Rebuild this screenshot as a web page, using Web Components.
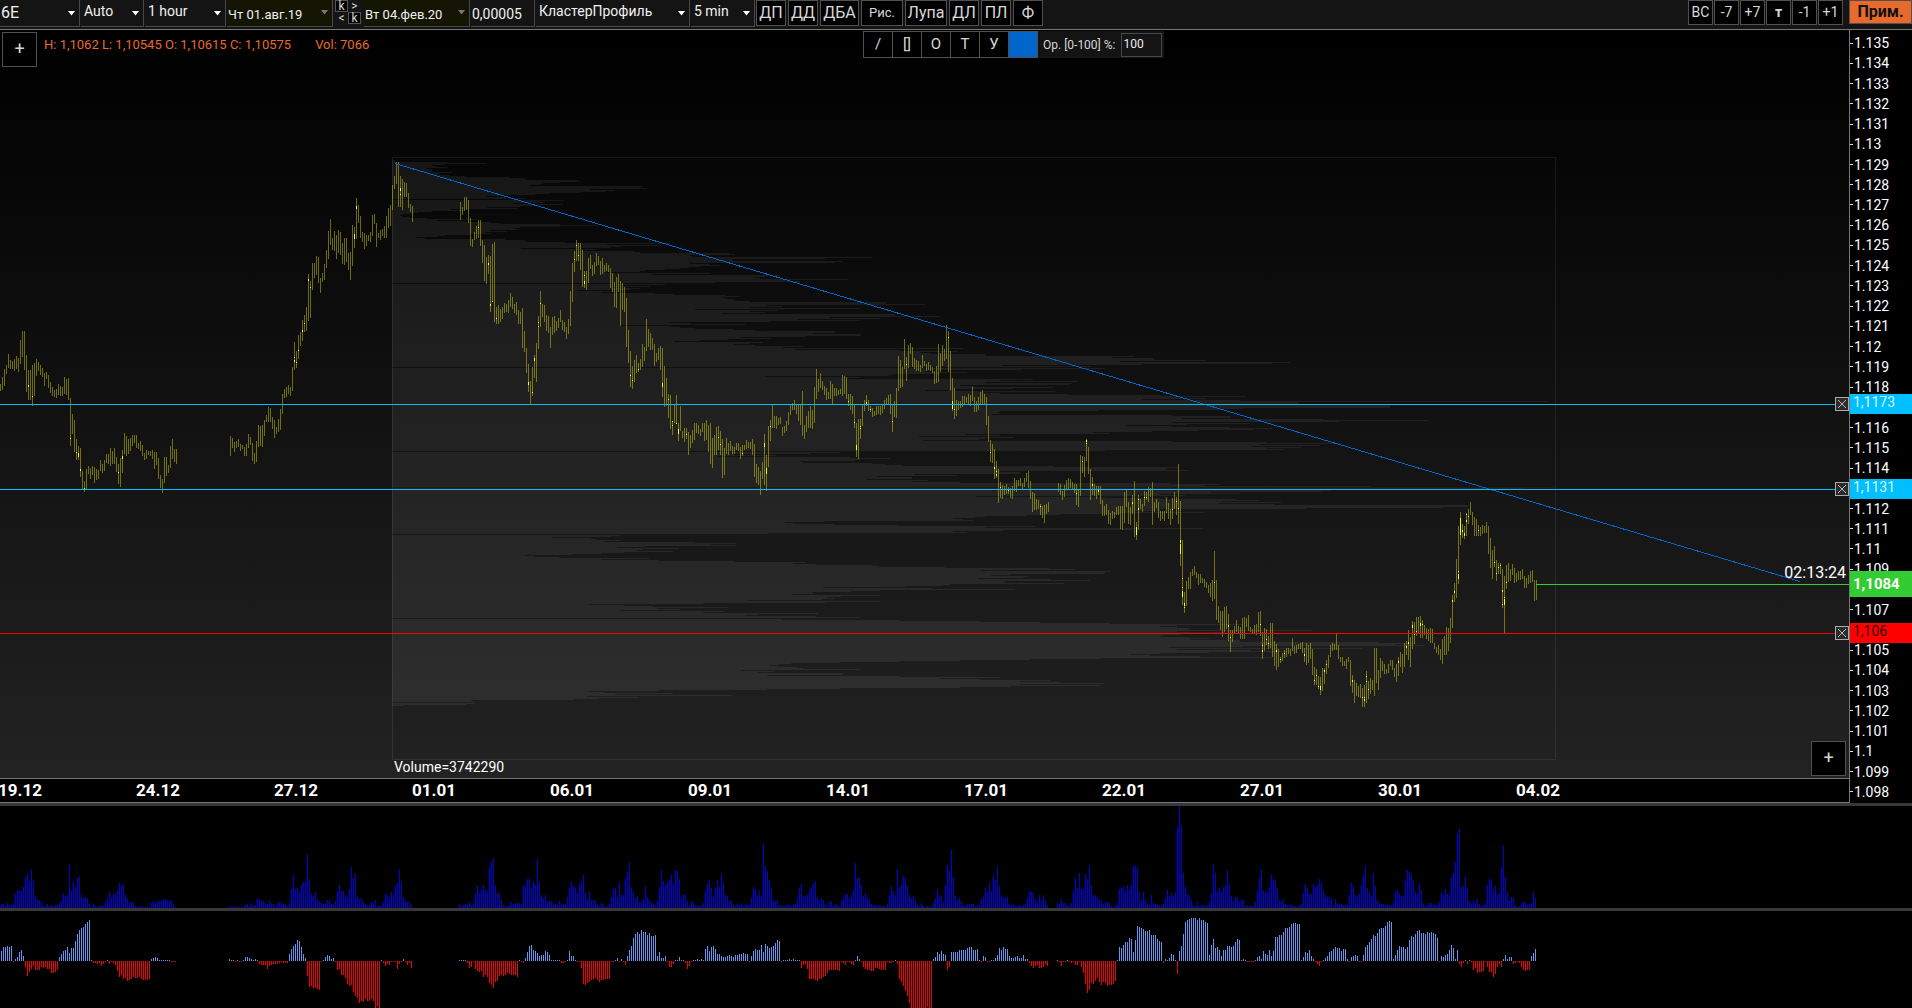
<!DOCTYPE html>
<html lang="ru">
<head>
<meta charset="utf-8">
<title>6E, 1 hour</title>
<style>
html,body{margin:0;height:100%;background:#000}
body{font-family:Roboto,"Liberation Sans",sans-serif;font-size:14px;color:#eee}
</style>
</head>
<body>
<trade-app></trade-app>
<script>
const define=(name,css,html,setup)=>customElements.define(name,class extends HTMLElement{
  connectedCallback(){
    if(this.shadowRoot)return;
    const root=this.attachShadow({mode:'open'});
    root.innerHTML=`<style>:host,*{box-sizing:border-box}${css}</style>${typeof html==='function'?html(this):html}`;
    if(setup)setup(root,this);
  }
});

/* ---------- market data: bars are 2px apart, a run starts at x ---------- */
const CANDLES={
0:`384 391 377 390 369 386 365 374 354 368 360 369 361 369 359 371 356 369 358 372 340 364 331 357 331 370 355 392 370 400 370 400 365 406 363 396 359 376 362 371 365 375 368 377 373 386 372 379 375 388 382 393 387 396 390 397 389 398 384 395 386 396 387 396 377 394 379 395 378 400 398 446 414 434 420 452 439 460 446 460 448 477 471 489 481 492 469 489 466 474 468 479 466 475 467 483 469 480 470 479 460 471 464 473 460 471 454 463 454 464 448 466 451 464 448 464 457 472 464 484 458 487 450 473 433 454 436 456 439 454 438 451 435 446 435 443 435 448 443 449 441 451 445 456 453 460 450 459 451 455 451 456 450 459 452 469 452 465 458 479 475 488 479 493 457 483 457 476 465 473 446 468 439 459 449 462 449 464`,
230:`436 456 438 448 442 452 441 448 439 447 444 451 445 449 447 456 444 456 434 448 437 445 443 461 453 464 441 462 425 447 426 446 425 447 420 436 415 422 407 422 408 422 417 429 420 438 427 434 419 432 409 430 394 414 389 398 387 397 385 394 387 396 367 391 342 370 351 368 335 359 332 346 320 341 315 332 307 331 274 321 281 318 263 290 263 278 256 275 257 283 278 293 273 282 264 280 250 268 231 259 219 245 238 250 231 251 235 259 230 253 232 255 243 264 238 265 238 262 253 270 252 280 225 266 227 248 198 239 205 223 216 238 232 242 233 249 235 246 235 241 232 242 215 236 214 224 223 247 233 238 230 240 229 236 226 238 216 238 208 228 205 226 185 210 176 189 162 184 162 207 176 207 179 210 182 197 183 197 193 208 204 212 206 222`,
460:`202 220 207 215 197 211 197 210 200 223 218 246 239 247 232 240 226 239 220 238 220 246 240 263 245 281 257 284 255 274 256 312 244 302 242 322 307 324 305 324 309 322 307 319 303 313 304 312 300 313 293 307 297 309 304 313 302 315 310 324 312 324 308 348 331 352 348 373 364 392 381 405 367 396 355 378 343 382 316 349 291 327 304 317 305 322 315 331 316 333 327 348 317 335 316 333 321 331 318 328 310 322 320 330 322 332 327 339 319 334 291 326 263 302 251 272 240 261 243 261 243 270 250 287 271 288 271 290 258 283 255 269 265 276 262 274 253 266 256 265 261 275 258 274 265 272 263 271 265 272 268 288 273 292 282 307 277 308 274 292 281 326 283 310 287 312 298 347 330 363 351 387 366 389 360 382 355 373 363 372 359 370 344 367 347 361 319 351 329 347 333 350 338 350 344 366 353 362 348 360 346 370 348 397 366 407 378 406 394 418 395 429 421 435 404 423 395 424 423 441 406 431 431 438 428 442 428 439 432 455 435 448 430 443 423 440 423 433 425 434 429 436 423 432 423 441 420 440 425 452 423 464 438 468 435 455 427 455 426 450 431 455 439 478 448 475 438 454 443 455 441 451 446 454 447 454 443 450 443 451 447 459 445 456 445 450 440 449 442 448 442 449 439 455 444 477 464 483 467 485 471 495 462 479 434 485 455 491 426 467 420 441 404 428 416 428 416 429 418 425 417 424 427 436 426 433 421 431 412 425 404 415 403 410 400 410 404 414 404 421 404 425 391 436 425 439 416 432 411 428 406 428 410 429 387 423 369 399 379 392 373 388 381 390 386 395 388 400 392 399 381 399 384 405 388 396 388 396 390 395 389 394 375 396 376 394 377 399 394 406 394 410 396 414 405 428 423 457 419 459`,
860:`419 439 405 426 400 411 395 406 400 411 406 412 408 417 411 416 406 415 406 414 406 415 405 413 400 409 398 405 395 405 394 414 405 432 401 417 388 418 356 391 360 388 367 387 339 369 357 381 345 368 343 354 347 367 358 369 360 371 361 371 365 372 355 368 361 366 364 371 362 370 365 371 367 373 371 384 366 383 344 382 353 372 345 366 349 361 325 359 331 372 351 391 378 411 388 419 400 416 401 410 401 408 396 407 396 405 397 403 394 405 395 406 387 401 397 412 401 412 397 410 392 405 390 404 394 404 397 425 416 442 440 462 444 463 449 479 461 478 469 503 482 498 485 499 486 495 484 494 487 494 488 498 486 499 478 491 480 492 480 486 478 486 483 489 478 487 473 482 471 488 481 499 492 512 493 510 499 510 500 509 504 515 506 518 505 523 504 514 502 512`,
1058:`483 492 484 495 491 500 485 497 480 490 478 489 479 488 482 490 484 493 484 505 489 507 455 496 456 473 457 477 439 461 447 474 469 500 477 495 484 496 486 499 486 495 486 504 500 516 506 516 504 515 510 524 513 525 511 519 512 518 507 515 506 515 506 529 506 530 492 523 489 507 502 524 507 525 495 514 481 537 522 540 495 530 499 509 504 512 491 506 492 500 487 502 488 497 482 525 502 512 499 508 502 518 511 521 511 519 511 521 497 513 503 519 509 525 498 519 492 509 497 515 464 524 501 566 540 605 592 613 581 606 577 589 572 589 569 576 566 575 572 578 574 585 574 583 578 583 579 587 582 588 585 593 583 597 580 601 551 599 580 620 606 623 611 630 611 637 607 632 606 629 614 641 630 652 630 642 626 634 620 632 626 633 627 639 618 639 617 639 618 627 615 631 627 632 629 634 625 634 624 635 612 632 611 636 632 659 628 651 629 645 636 649 623 648 623 657 641 666 644 670 649 667 657 663 653 661 650 658 648 657 648 654 649 656 638 651 646 654 645 653 644 649 643 649 642 653 648 662 643 665 645 663 643 659 649 675 667 685 669 685 676 689 677 695 668 691 668 684 660 674 655 668 645 657 643 651 644 650 634 650 645 659 657 662 657 666 661 666 659 669 657 662 660 686 675 693 680 703 683 696 686 697 684 698 688 707 685 707 671 703 681 699 678 694 680 690 648 696 648 683 670 690 658 678 661 671 664 674 669 674 664 673 660 666 660 670 668 677 664 682 657 676 652 667 654 673 643 667 641 655 630 660 637 667 621 649 622 644 617 636 617 633 616 638 620 638 625 635 628 639 629 641 628 643 629 643 643 649 647 653 645 655 649 660 639 664 636 655 627 655 628 651 618 643 595 628 583 602 559 598 526 584 512 545 524 538 526 539 513 536 509 524 502 515 512 525 517 536 519 536 525 536 527 536 525 534 526 533 522 533 526 554 538 568 550 579 546 567 560 581 563 574 563 574 569 608 576 633 565 589 563 582 569 581 564 575 568 583 573 582 571 580 571 580 569 579 576 588 578 588 575 584 571 583 570 582 580 601 580 600`};
/* x, y, length of the high-volume clusters */
const CLUSTERS=`28 385 2 32 396 1 70 438 1 76 452 1 78 453 4 80 469 2 84 488 1 118 472 1 122 456 3 294 357 1 294 360 2 296 362 1 298 350 1 302 330 2 304 323 1 308 279 2 310 287 1 354 234 5 356 206 3 400 188 3 400 194 1 478 227 1 488 263 2 490 304 2 492 301 1 496 318 1 528 382 3 532 392 1 534 358 3 538 322 1 538 326 1 540 303 1 574 259 1 576 245 1 578 255 1 584 275 1 584 281 3 630 375 1 632 380 1 638 369 1 662 383 4 668 399 1 672 421 1 672 425 1 676 423 1 678 429 5 686 434 1 718 437 1 720 444 1 742 453 1 764 443 4 766 468 6 770 426 1 848 401 1 854 422 1 856 445 5 860 426 1 860 428 1 866 402 2 870 409 1 892 421 1 906 364 1 948 337 1 952 401 8 954 409 1 990 452 1 994 467 2 996 471 1 996 474 2 1000 487 1 1008 489 2 1040 506 1 1076 493 1 1082 461 1 1086 440 2 1086 443 1 1092 484 2 1098 490 2 1132 502 2 1138 499 1 1138 508 2 1136 527 8 1144 497 1 1146 497 1 1172 509 1 1176 501 1 1178 508 1 1180 540 3 1180 544 10 1182 578 1 1182 587 1 1182 591 6 1184 603 3 1184 607 1 1214 582 1 1228 625 2 1230 637 1 1260 624 1 1262 645 1 1262 650 2 1266 639 1 1268 643 1 1276 650 2 1280 659 1 1284 653 1 1304 654 2 1314 680 1 1316 675 1 1318 686 1 1320 686 4 1324 670 2 1326 664 1 1352 680 2 1362 697 1 1364 697 1 1364 699 2 1366 676 1 1366 681 1 1368 689 1 1398 661 2 1406 646 2 1408 642 2 1412 625 3 1414 634 1 1416 631 1 1420 623 3 1422 624 1 1452 600 2 1454 591 2 1458 571 1 1458 574 5 1460 518 17 1462 530 2 1464 533 3 1466 514 1 1466 520 2 1468 516 1 1478 530 1 1494 562 1 1496 573 1 1498 567 1 1500 565 1 1502 590 2 1502 604 1 1504 597 1 1504 599 6 1506 582 1`;
/* right edge of the volume profile, one price step per row, from y=160 down */
const PROFILE=`395 395 447 486 444 432 436 448 426 432 432 432 452 440 438 450 465 509 524 526 578 580 560 543 540 530 643 640 646 590 615 605 580 550 535 502 486 505 525 392
564 540 545 513 563 538 520 487 518 451 465 432 418 414 402 400 402 410 427 477 437 465 490 500 560 598 560 520 515 518 490 507 485 492 470 445 438 416 425 505 524 526 565 670 607 661 620 610 521 595 575 634 640 730 735 690 692 872 825 733 733 842 835 690 710 720 700 689 680 665 645 640 607 710 652 780 765 755 760 848 790 800 715 392
665 612 650 612 640 630 577 620 601 655 674 725 740 722 725 733 735 750 886 886 925 767 782 750 860 695 778 750 765 722 895 895 940 830 880 798 860 770 669 690 745 620 670 680 695 734 755 835 835 813 860 861 805 740 771 728 700 674 763 750 734 755 804 783 963 795
900 958 920 930 985 985 1134 1112 1154 1154 1206 1120 1290 1272 1142 1002 1091 392 1105 1022 930 925 967 940 893 889 765 860 845 1033 1000 1078 985 1072 1069 960 975 1053 1013 955 925 1056 985 1000 1068 1160 1246 1180 1206 1141
1240 1548 1299 1299 1299 1390 1390 1390 1243 1220 1098 1000 998 1000 992 1172 1231 1231 1182 1323 1428 1339 1172 1250 1187 1126 1172 1230 1272 1254 1198 1152 1093 1109 966 1000 919 1014 985 979 923 1172 1266 1341 1260 1320 1252 1301 1267 1284
1105 392 840 810 734 776 718 850 890 860 855 800 803 872 885 902 1054 1178 1166 1167 1188 1000 1020 1020 914 957 877 912 912 866 928 912 960 1170 1220 1205 1371 392 1524 1524 1331 1321 1210 1240 1160 1185 976 1105 1160 1236
1259 1222 1281 1219 1274 1468 1468 1443 1306 1160 1160 1135 1204 1120 1060 1026 985 975 953 963 973 824 785 793 834 897 1035 985 1203 1132 1003 953 967 768 392 620 611 552 591 596 620 604 695 736 711 736 644 617 679 642
637 673 624 601 572 525 534 559 649 601 659 734 806 793 816 872 879 945 1049 1075 981 1111 1106 1104 1010 991 1028 1023 978 1050 1090 1005 1004 1064 950 943 905 823 932 1015 880 851 812 813 792 880 841 827 834 822
748 880 825 703 589 624 653 728 657 680 620 724 703 818 758 745 816 860 392 782 900 980 1040 1110 1243 1177 1160 1177 1188 1189 1312 1177 1226 1180 1180 1163 1160 1188 1209 1190 1240 1240 1378 1416 1395 1424 1242 1169 1362 1177
1250 1290 1209 1160 1130 1150 1200 1272 1100 1030 960 900 840 791 779 770 778 797 803 860 741 775 758 844 842 767 900 1000 940 980 1050 1020 1060 1104 1020 1100 1010 960 840 767 659 589 604 673 615 732 587 638 599 574 471 475 392 475 466 404`;
/* keyed by bar number */
const VOLUME={
0:`4 4 2 5 3 3 5 14 18 17 17 21 30 34 27 39 27 12 9 8 6 2 2 4 2 3 2 3 3 5 8 15 12 13 43 17 26 21 30 32 14 10 11 10 5 1 4 2 1 2 3 2 6 9 16 11 14 14 17 25 22 24 14 10 6 6 6 2 1 1 2 1 1 1 1 5 7 6 6 7 7 9 9 8 7 8 4 1`,
114:`2 1 2 1 1 1 1 1 3 4 2 5 2 3 10 8 7 7 5 4 8 5 4 1 5 6 6 4 3 2 5 19 33 19 20 17 23 26 26 54 29 15 12 16 9 7 5 4 5 8 8 4 3 7 17 23 17 17 13 11 19 41 30 34 11 9 10 6 4 3 3 6 5 8 2 3 2 6 14 13 10 16 13 22 25 39 26 11 7 6 6 3`,
229:`4 2 3 4 3 6 3 5 14 23 15 19 23 18 17 41 46 50 23 15 15 8 3 2 2 3 6 4 5 5 5 4 23 23 29 30 20 26 23 49 26 13 10 13 7 7 7 5 4 3 7 5 3 4 11 20 26 22 21 15 24 26 33 15 10 17 8 8 8 3 2 5 4 1 2 4 11 19 20 11 26 13 13 30 36 46 21 16 10 12 6 6 9 22 11 9 6 5 3 7 19 38 27 23 26 28 33 25 38 37 29 11 13 14 7 2 7 5 3 3 2 3 5 17 24 28 20 11 20 28 21 34 25 14 12 7 8 3 2 4 3 5 2 4 3 3 10 21 19 13 17 12 64 42 37 28 20 8 7 8 3 3 2 3 3 4 2 3 4 10 20 24 12 11 13 18 20 24 27 11 8 10 8 4 2 6 7 2 4 3 1 8 10 14 14 10 13 17 45 30 30 23 12 15 11 9 4 3 3 2 3 2 2 1 4 12 22 17 13 39 20 23 32 30 22 14 10 12 8 3 2 5 2 1 2 2 1 5 9 19 13 12 6 23 43 37 58 31 12 8 10 7 3 2 4 4 4 4 1 3 3 9 11 20 16 25 17 32 28 42 22 13 11 10 11 5 3 4 2 2 3 2 3 4 10 17 17 15 9 6 13 8 13 8 3`,
528:`5 4 9 5 5 3 2 5 17 30 20 35 19 19 34 29 42 23 13 13 11 9 8 4 6 6 5 2 1 3 5 19 20 22 17 23 18 23 42 42 41 16 8 16 9 5 3 13 5 4 3 3 2 4 10 18 12 15 12 16 80 102 83 35 22 14 13 8 3 2 6 2 3 3 2 3 6 14 44 35 17 20 16 21 22 38 24 12 7 11 11 6 9 8 2 3 2 2 2 6 17 30 39 18 15 16 21 33 29 28 20 8 7 9 4 3 3 4 2 2 1 3 4 15 24 20 14 14 24 21 23 29 25 17 13 11 11 9 2 9 5 3 4 3 3 3 13 25 22 13 11 14 23 33 42 20 16 12 35 22 8 5 4 4 3 4 3 3 6 16 18 15 12 12 27 38 36 34 28 16 14 25 18 5 2 3 5 5 4 3 3 6 15 14 19 14 14 30 35 46 74 79 21 22 32 20 7 5 8 6 9 4 2 3 5 23 30 28 19 22 14 15 41 63 31 16 7 11 11 3 1 2 5 6 6 3 4 5 16 10`};
const DELTA={
0:`10 14 14 15 14 15 -1 2 4 9 11 5 -6 -15 -11 -8 -5 -9 -9 -9 -6 -7 -6 -8 -8 -12 -12 -11 -9 4 7 10 11 14 8 13 13 20 27 31 33 34 37 39 41 1 -2 -2 -3 -2 -5 -3 -1 1 -3 -1 -2 -4 -10 -16 -14 -18 -17 -20 -19 -18 -16 -17 -17 -16 -18 -19 -19 -19 -18 2 3 4 3 1 1 1 1 1 1 -1 -1 -1`,
114:`2 1 1 -1 1 -1 -1 1 4 4 3 2 1 2 1 -3 -4 -4 -4 -8 -5 -4 -3 -3 -3 -2 -1 -2 -2 -2 7 12 15 17 21 20 14 7 3 -15 -26 -25 -27 -27 -28 -29 -1 1 4 6 5 2 3 -1 -9 -8 -14 -14 -17 -23 -25 -24 -31 -35 -37 -42 -40 -41 -38 -40 -40 -38 -40 -47 -46 -47 1 -2 -5 -3 -4 -1 -1 -1 -8 -3 -1 2 -1 -4 -2 -7`,
229:`1 1 1 1 -2 -7 -6 -1 -8 -10 -11 -10 -16 -14 -16 -22 -24 -27 -21 -20 -15 -14 -15 -14 -12 -13 -14 -14 -14 -16 1 -1 -2 3 9 15 16 11 10 8 5 6 6 10 9 6 1 1 1 1 1 -2 -2 -1 1 10 5 5 1 -1 -1 -7 -23 -24 -22 -21 -19 -18 -17 -19 -21 -19 -19 -18 -18 -18 -1 -1 1 3 -1 2 -1 -4 5 11 15 23 27 29 27`,
320:`31 29 29 26 28 25 25 26 5 9 3 3 5 -1 -6 -6 -3 1 1 4 1 1 -2 -8 -5 -1 1 1 2 1 2 1 12 15 10 14 15 12 7 7 5 4 4 5 6 5 4 6 6 7 7 8 7 7 -1 5 10 12 11 11 16 9 17 15 13 14 15 18 21 20 -1 1 1 1 2 1 2 1 1 1 -7 -4 -3 -8 -18 -18 -18 -19 -20 -18 -18 -16 -15 -12 -9 -9 -9 -9 -9 -10 -1 -2 -4 -1 -1 -3 -4 1 5 2 -1 -6 -8 -9 -9 -10 -10 -7 -7 -8 -9 -9 -9 -1 -2 -2 -1 1 -3 -18 -21 -25 -30 -35 -42 -47 -47 -47 -47 -47 -47 -47 -47 -46 -47 -47`,
466:`2 4 9 7 10 7 6 -9 -6 9 9 9 9 11 11 11 11 13 14 14 11 11 12 1 -1 5 4 -1 -1 1 1 3 6 13 11 14 12 12 5 3 3 4 5 3 3 6 2 2 -2 -5 -7 -5 -4 -7 -7 -6 -3 -5`,
528:`1 -1 -5 -1 -1 1 -1 -2 -1 -4 -4 -1 -6 -12 -23 -32 -29 -22 -23 -20 -17 -21 -24 -21 -22 -25 -24 -24 -23 -20 1 14 13 16 19 19 23 22 9 21 35 34 33 32 30 30 31 26 26 26 22 20 19 -2 2 1 3 7 6 1 -13 10 15 27 39 41 42 43 43 43 41 43 41 41 39 38 6 16 22 13 14 11 5 11 11 15 15 14 15 19 22 21 1 2 1 -1 -1 -1 -1 1 4 5 2 10 7 6 11 5 10 24 24 26 26 29 33 33 34 37 38 38 37 37 1 4 9 8 11 5 2 -1 -3 -5 -1 1 3 5 9 10 12 14 13 13 10 12 12 2 -1 4 5 6 5 -1 -1 6 14 16 19 22 26 25 28 32 33 33 35 39 40 39 2 6 11 15 14 14 12 14 21 25 24 27 30 31 28 28 27 29 28 29 28 27 23 -1 5 4 6 7 11 16 13 2 11 -3 -6 -2 1 -3 1 -1 -9 -7 -12 -11 -11 -10 -1 -6 -11 -11 -16 -13 -6 -3 -6 2 6 2 4 4 -3 -2 -1 -2 -6 -9 -10 -9 -9 5 8 12`};
const nums=s=>s.trim().split(/\s+/).map(Number);
const TOP=30;

/* ---------- controls ---------- */
define('pick-list',`
:host{display:block;position:relative;height:27px;flex:none;width:var(--w)}
select{appearance:none;width:100%;height:100%;margin:0;padding:0 16px 5px 3px;border:solid #484848;border-width:0 1px 1px 0;border-radius:0;background:#141414;color:#f0f0f0;font:inherit}
:host([big]) select{font-size:16px;padding:0 16px 2px 1px}
:host([date]) select{background:#151504;padding:3px 16px 0 1px;font-size:13px}
svg{position:absolute;right:5px;top:11px;width:7px;height:5px;fill:#fff;pointer-events:none}
:host([date]) svg{fill:#77777a;top:10px}`,
h=>`<select aria-label="${h.getAttribute('name')}"><option>${h.getAttribute('value')}</option></select><svg viewBox="0 0 7 5"><path d="M0 0h7L3.5 4.5z"/></svg>`);

define('tool-button',`
:host{display:block;flex:none;width:var(--w,30px);height:var(--h,26px)}
button{width:100%;height:100%;margin:0;padding:0 0 2px;display:grid;place-items:center;border:1px solid #505050;border-radius:0;background:var(--bg,#000);color:var(--ink,#d8d8d8);font:inherit}`,
h=>`<button${h.title?` aria-label="${h.title}"`:''}><slot></slot></button>`);

define('top-bar',`
:host{display:flex;height:29px;background:#141414;align-items:flex-start;gap:1px;overflow:hidden}
.step{display:grid;grid-template-columns:13px 13px;grid-auto-rows:12px;margin:0 2px 0 1px;width:26px}
.step button{margin:0;padding:0;border:0;background:none;color:#d8d8d8;font:inherit;font-size:12px;line-height:10px}
.step .k{border:1px solid #555;background:#000}
input{width:64px;height:27px;margin:0;padding:2px 0 0 1px;border:solid #484848;border-width:0 1px 1px 0;background:#141414;color:#f0f0f0;font:inherit}
.tools{display:flex;gap:2px;font-size:16px}
.days{display:flex;gap:1px;margin-left:auto;margin-right:5px;font-size:14px;--w:25px;--h:25px}
.small{font-size:13px}
.apply{--w:63px;--h:24px;--bg:#e8692c;--ink:#111;font-weight:700;font-size:16px}`,`
<pick-list big name="Инструмент" value="6E" style="--w:80px"></pick-list>
<pick-list name="Масштаб" value="Auto" style="--w:63px"></pick-list>
<pick-list name="Период" value="1 hour" style="--w:81px"></pick-list>
<pick-list date name="Дата начала" value="Чт 01.авг.19" style="--w:106px"></pick-list>
<div class="step"><button class="k">k</button><button>&gt;</button><button>&lt;</button><button class="k">k</button></div>
<pick-list date name="Дата конца" value="Вт 04.фев.20" style="--w:106px"></pick-list>
<input aria-label="Шаг цены" value="0,00005">
<pick-list name="Тип графика" value="КластерПрофиль" style="--w:154px"></pick-list>
<pick-list name="Кластер" value="5 min" style="--w:64px"></pick-list>
<div class="tools"><tool-button>ДП</tool-button><tool-button>ДД</tool-button><tool-button style="--w:39px">ДБА</tool-button><tool-button class="small" style="--w:42px">Рис.</tool-button><tool-button style="--w:42px">Лупа</tool-button><tool-button>ДЛ</tool-button><tool-button>ПЛ</tool-button><tool-button>Ф</tool-button></div>
<div class="days"><tool-button>ВС</tool-button><tool-button>-7</tool-button><tool-button>+7</tool-button><tool-button><b>т</b></tool-button><tool-button>-1</tool-button><tool-button>+1</tool-button></div>
<tool-button class="apply">Прим.</tool-button>`);

define('draw-bar',`
:host{display:flex;height:27px;background:#141414;align-items:center;--w:30px;--h:27px;font-size:15px}
tool-button + tool-button{margin-left:-1px}
label{font-size:12px;color:#d8d8d8;margin:0 6px 0 5px}
input{width:41px;height:24px;margin:0 2px 0 0;padding:0 0 2px 1px;border:1px solid #484848;background:#141414;color:#eee;font:inherit;font-size:12px}`,`
<tool-button>/</tool-button><tool-button>[]</tool-button><tool-button>О</tool-button><tool-button>Т</tool-button><tool-button>У</tool-button><tool-button title="Цвет" style="--bg:#0066cc"></tool-button>
<label for="op">Ор. [0-100] %:</label><input id="op" value="100">`);

/* ---------- chart ---------- */
define('price-plot',`
:host{display:block;height:748px;background:linear-gradient(#000,#222)}
svg{display:block;width:100%;height:100%;shape-rendering:crispEdges;fill:none;overflow:hidden}`,()=>{
  let bars='',marks='',rows='';
  for(const[start,list]of Object.entries(CANDLES)){
    const v=nums(list);
    for(let i=0;i<v.length;i+=2)bars+=`M${+start+i+.5} ${v[i]-TOP}V${v[i+1]-TOP}`;
  }
  const c=nums(CLUSTERS);
  for(let i=0;i<c.length;i+=3)marks+=`M${c[i]+.5} ${c[i+1]-TOP}v${c[i+2]}`;
  nums(PROFILE).forEach((x,i)=>{if(x>392)rows+=`M392 ${160+i-TOP}H${x}v1H392z`});
  return `<svg role="img" aria-label="6E">
<rect x="392.5" y="127.5" width="1163" height="602" stroke="#fff" stroke-opacity=".08"/>
<path d="${rows}" fill="#fff" fill-opacity=".068"/>
<path d="M392 457.5H1555" stroke="#f00" stroke-opacity=".12"/>
<path d="${bars}" stroke="#ff0" stroke-opacity=".4"/>
<path d="${marks}" stroke="#ff0"/>
<path d="M395 133.5L1800 551.5" stroke="#0066cc"/></svg>`;
});

define('price-axis',`
:host{display:flex;flex-direction:column;border-left:1px solid #777;background:#000;padding:3px 0 1px;color:#fff;font-size:14px}
div{flex:1;display:flex;align-items:center;gap:1px;line-height:16px}
div::before{content:"";width:3px;height:1px;background:#ddd}
.off{visibility:hidden}`,()=>{
  const hidden=[1117,1113,1108,1106];let out='';
  for(let p=1135;p>=1098;p--)out+=hidden.includes(p)?'<div class="off"></div>':`<div>${p/1000}</div>`;
  return out;
});

define('time-axis',`
:host{display:flex;height:25px;overflow:hidden;border:solid #777;border-width:1px 0;background:#000;color:#fff;font-weight:700;font-size:17px}
span{flex:0 0 138px;text-align:center;line-height:22px}
span:first-of-type{margin-left:-49px}`,
'19.12 24.12 27.12 01.01 06.01 09.01 14.01 17.01 22.01 27.01 30.01 04.02'.split(' ').map(d=>`<span>${d}</span>`).join(''));

define('price-level',`
:host{position:absolute;left:var(--from,0px);right:0;top:var(--y);height:var(--size,20px);display:flex;align-items:center;color:var(--ink)}
i{flex:1;height:1px;background:var(--tone)}
button{width:14px;height:14px;margin:0;padding:1px;border:1px solid #aaa;background:#2b2b2b;display:block}
button svg{display:block;width:10px;height:10px;stroke:#bbb}
output{width:62px;height:100%;margin-left:1px;background:var(--tone);padding-left:3px;line-height:calc(var(--size,20px) - 4px)}
:host([live]) output{font-weight:700;font-size:15px;line-height:26px}`,
h=>`<i></i>${h.hasAttribute('live')?'':'<button aria-label="Удалить уровень"><svg viewBox="0 0 10 10"><path d="M1 1L9 9M9 1L1 9"/></svg></button>'}<output><slot></slot></output>`);

define('main-chart',`
:host{display:grid;grid-template-columns:minmax(0,1fr) 63px;position:relative;border-top:1px solid #777}
price-axis{grid-row:1/3;grid-column:2}
.over{position:absolute}
.quote{left:44px;top:7px;display:flex;gap:24px;color:#e8692c;font-size:13px;line-height:15px}
.plus{--w:35px;--h:35px;font-size:18px}
.volume{left:394px;top:729px;line-height:16px;color:#fff}
.timer{right:66px;top:534px;font-size:16px;line-height:18px;color:#fff}`,`
<price-plot></price-plot><price-axis></price-axis><time-axis></time-axis>
<price-level style="--y:364px;--tone:#00bfff;--ink:#d8f4ff">1,1173</price-level>
<price-level style="--y:449px;--tone:#00bfff;--ink:#d8f4ff">1,1131</price-level>
<price-level live style="--y:541px;--size:26px;--from:1536px;--tone:#32cd32;--ink:#fff">1,1084</price-level>
<price-level style="--y:593px;--tone:#f00;--ink:#300000">1,106</price-level>
<tool-button class="over plus" style="left:2px;top:2px">+</tool-button>
<div class="over quote"><span>H: 1,1062 L: 1,10545 O: 1,10615 C: 1,10575</span><span>Vol: 7066</span></div>
<draw-bar class="over" style="left:863px;top:1px"></draw-bar>
<div class="over volume">Volume=3742290</div>
<div class="over timer">02:13:24</div>
<tool-button class="over plus" style="right:66px;top:711px">+</tool-button>`);

/* ---------- histograms ---------- */
define('bar-panel',`
:host{display:block;overflow:hidden;background:#000;border-top:3px solid #38383b}
svg{display:block;width:100%;height:100%;shape-rendering:crispEdges;fill:none}`,h=>{
  const base=+h.getAttribute('base');let up='',down='';
  for(const[start,list]of Object.entries(h.getAttribute('kind')==='delta'?DELTA:VOLUME))
    nums(list).forEach((v,i)=>{
      const d=`M${(+start+i)*2+1.5} ${base}v${-v}`;
      if(v>0)up+=d;else down+=d;
    });
  return `<svg role="img" aria-label="${h.getAttribute('kind')}"><path d="${up}" stroke="${h.getAttribute('tone')}"/><path d="${down}" stroke="#f00000"/></svg>`;
});

define('trade-app',`
:host{display:flex;flex-direction:column;min-height:100vh}
.vol{height:105px}
.delta{flex:1 0 100px;height:100px}`,`
<top-bar></top-bar><main-chart></main-chart>
<bar-panel class="vol" kind="volume" base="102" tone="#0000e6"></bar-panel>
<bar-panel class="delta" kind="delta" base="50" tone="#6495ed"></bar-panel>`);
</script>
</body>
</html>
